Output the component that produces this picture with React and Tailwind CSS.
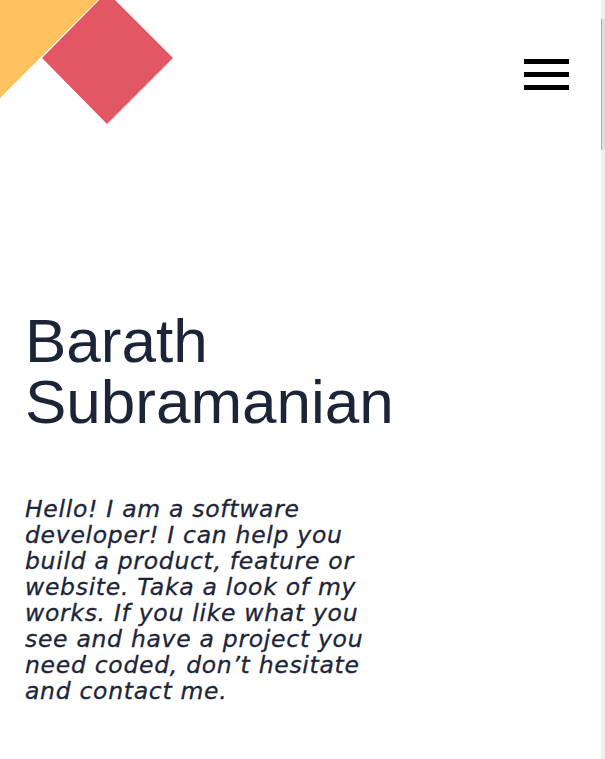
import React from "react";

const lines = [
  "Hello! I am a software",
  "developer! I can help you",
  "build a product, feature or",
  "website. Taka a look of my",
  "works. If you like what you",
  "see and have a project you",
  "need coded, don’t hesitate",
  "and contact me.",
];

export default function App() {
  return (
    <div className="flex h-[759px] w-full overflow-hidden bg-white">
      <main className="flex-1">
        {/* header */}
        <header className="flex items-start justify-between">
          <svg width="173" height="124" viewBox="0 0 173 124" className="block">
            <polygon points="0,0 98,0 0,98" fill="#fdc15d" />
            <polygon points="107,-8 173,58 107,124 42,58" fill="#e35664" />
          </svg>
          <button className="mt-[59px] mr-[32px] flex w-[45px] flex-col gap-[8.5px]">
            <span className="block h-[4.5px] w-full bg-black" />
            <span className="block h-[4.5px] w-full bg-black" />
            <span className="block h-[4.5px] w-full bg-black" />
          </button>
        </header>

        {/* hero */}
        <section className="pl-[25px]">
          <h1 className="mt-[186px] font-['Liberation_Sans',Arial,sans-serif] text-[62px] leading-[61px] font-normal text-[#1c2538]">
            Barath
            <br />
            Subramanian
          </h1>
          <p className="mt-[64px] font-['DejaVu_Sans',sans-serif] text-[23.5px] leading-[26px] italic tracking-[0.7px] text-[#1c2538] [-webkit-text-stroke:0.3px_#1c2538]">
            {lines.map((l, i) => (
              <span key={i} className="block whitespace-nowrap">
                {l}
              </span>
            ))}
          </p>
        </section>
      </main>

      {/* scrollbar strip */}
      <div className="w-[4px] bg-[#efefef]">
        <div className="mt-[19px] h-[131px] border-l border-[#b0b0b0] bg-[#dedede]" />
      </div>
    </div>
  );
}
